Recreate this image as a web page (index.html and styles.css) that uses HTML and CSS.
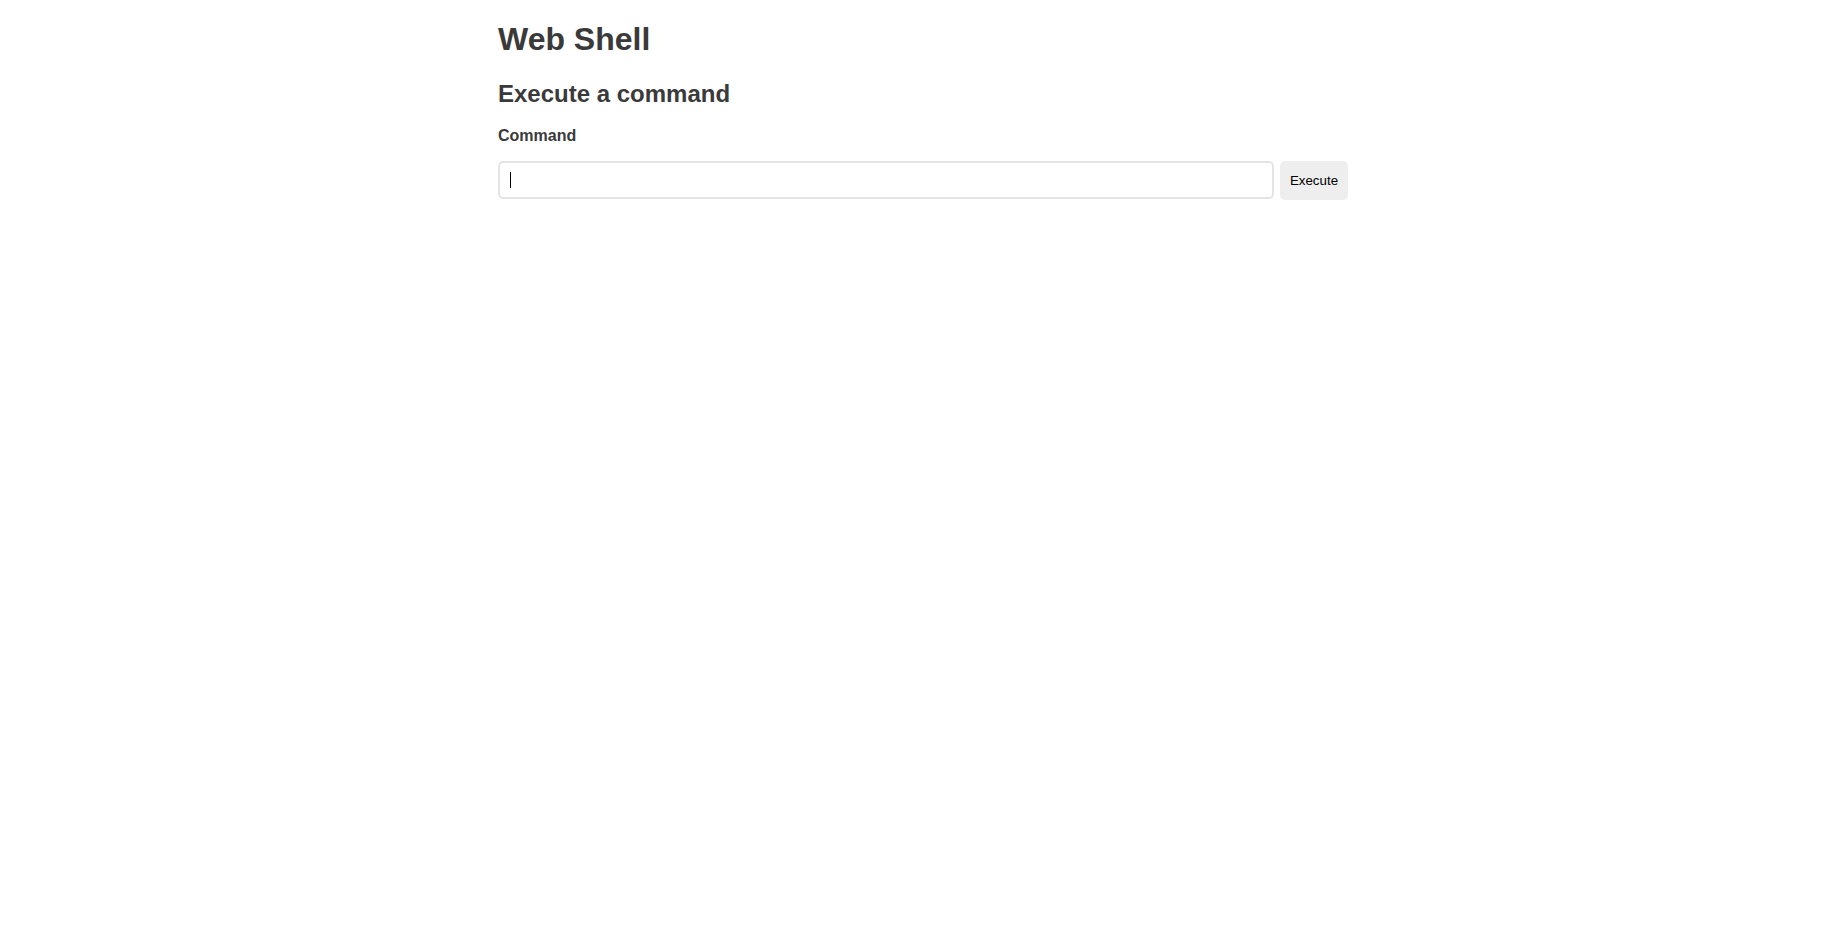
FILE: index.html
```html
<!DOCTYPE html>
<html lang="en">
<head>
<meta charset="utf-8">
<title>Web Shell</title>
<link rel="stylesheet" href="styles.css">
</head>
<body>
<main class="page">
  <h1 class="title">Web Shell</h1>
  <h2 class="subtitle">Execute a command</h2>
  <form class="cmd-form" onsubmit="return false">
    <label class="cmd-label" for="cmd">Command</label>
    <div class="cmd-row">
      <div class="cmd-field">
        <input class="cmd-input" id="cmd" type="text">
        <span class="caret"></span>
      </div>
      <button class="cmd-btn" type="submit">Execute</button>
    </div>
  </form>
</main>
</body>
</html>
```

FILE: styles.css
```css
html, body {
  margin: 0;
  padding: 0;
  background: #fff;
}
body {
  font-family: "Liberation Sans", Arial, sans-serif;
  color: #3a3a3a;
}
.page {
  width: 850px;
  margin: 0 auto;
  padding-top: 20px;
}
.title {
  margin: 0;
  font-size: 32px;
  line-height: 38px;
  font-weight: bold;
}
.subtitle {
  margin: 21px 0 0;
  font-size: 24px;
  line-height: 29px;
  font-weight: bold;
}
.cmd-form {
  margin: 18px 0 0;
}
.cmd-label {
  display: block;
  font-size: 16px;
  line-height: 20px;
  font-weight: bold;
}
.cmd-row {
  display: flex;
  gap: 6px;
  margin-top: 15px;
}
.cmd-field {
  flex: 1;
  position: relative;
  display: flex;
}
.cmd-input {
  flex: 1;
  box-sizing: border-box;
  height: 38px;
  border: 2px solid #e4e4e4;
  border-radius: 5px;
  padding: 0 10px;
  font-family: "Liberation Sans", Arial, sans-serif;
  font-size: 14px;
  color: #000;
  outline: none;
  background: #fff;
}
.caret {
  position: absolute;
  left: 12px;
  top: 11px;
  width: 1px;
  height: 16px;
  background: #000;
}
.cmd-btn {
  box-sizing: border-box;
  width: 68px;
  height: 39px;
  border: none;
  border-radius: 5px;
  background: #eeeeee;
  font-family: "Liberation Sans", Arial, sans-serif;
  font-size: 13.33px;
  color: #000;
  padding: 0;
}
```
